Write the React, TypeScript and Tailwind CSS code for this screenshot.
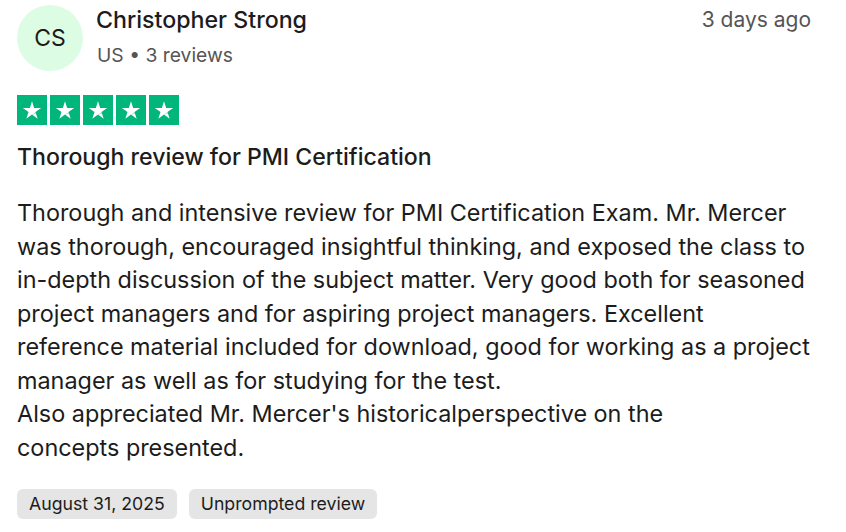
import React from 'react';

const lines = [
  'Thorough and intensive review for PMI Certification Exam. Mr. Mercer',
  'was thorough, encouraged insightful thinking, and exposed the class to',
  'in-depth discussion of the subject matter. Very good both for seasoned',
  'project managers and for aspiring project managers. Excellent',
  'reference material included for download, good for working as a project',
  'manager as well as for studying for the test.',
  "Also appreciated Mr. Mercer's historicalperspective on the",
  'concepts presented.',
];

function Star() {
  return (
    <div className="w-[30px] h-[30px] bg-[#00b67a] flex items-center justify-center">
      <svg width="20" height="20" viewBox="0 0 24 24">
        <path d="M12 1.5l2.6 8h8.4l-6.8 4.9 2.6 8L12 17.5l-6.8 4.9 2.6-8L1 9.5h8.4z" fill="#fff" />
        <path d="M16.2 14.4l0.7 2.2L12 17.5z" fill="#00b67a" opacity="0.35" />
      </svg>
    </div>
  );
}

export default function App() {
  return (
    <div className="min-h-screen bg-white text-[#1c1c1c] font-['Inter',sans-serif] px-[17px] pt-[5px]">
      <div className="flex items-start justify-between w-[794px]">
        <div className="flex gap-[14px]">
          <div className="w-[66px] h-[66px] rounded-full bg-[#dcfce3] flex items-center justify-center text-[23px]">
            CS
          </div>
          <div>
            <div className="text-[23.2px] leading-[30px] font-medium -ml-px">Christopher Strong</div>
            <div className="text-[19.3px] leading-[28px] mt-[6px] text-[#555]">US • 3 reviews</div>
          </div>
        </div>
        <div className="text-[21px] leading-[30px] text-[#555]">3 days ago</div>
      </div>

      <div className="flex gap-[3px] mt-[24px]">
        <Star />
        <Star />
        <Star />
        <Star />
        <Star />
      </div>

      <h2 className="mt-[17px] text-[23.1px] leading-[30px] font-medium">Thorough review for PMI Certification</h2>

      <div className="mt-[24px] text-[23.4px] leading-[33.5px]">
        {lines.map((l, i) => (
          <div key={i} className="whitespace-nowrap">{l}</div>
        ))}
      </div>

      <div className="flex gap-3 mt-[25px]">
        <span className="h-[30px] px-3 rounded-md bg-[#e5e5e5] text-[17.7px] flex items-center">August 31, 2025</span>
        <span className="h-[30px] px-3 rounded-md bg-[#e5e5e5] text-[17.7px] flex items-center">Unprompted review</span>
      </div>
    </div>
  );
}
